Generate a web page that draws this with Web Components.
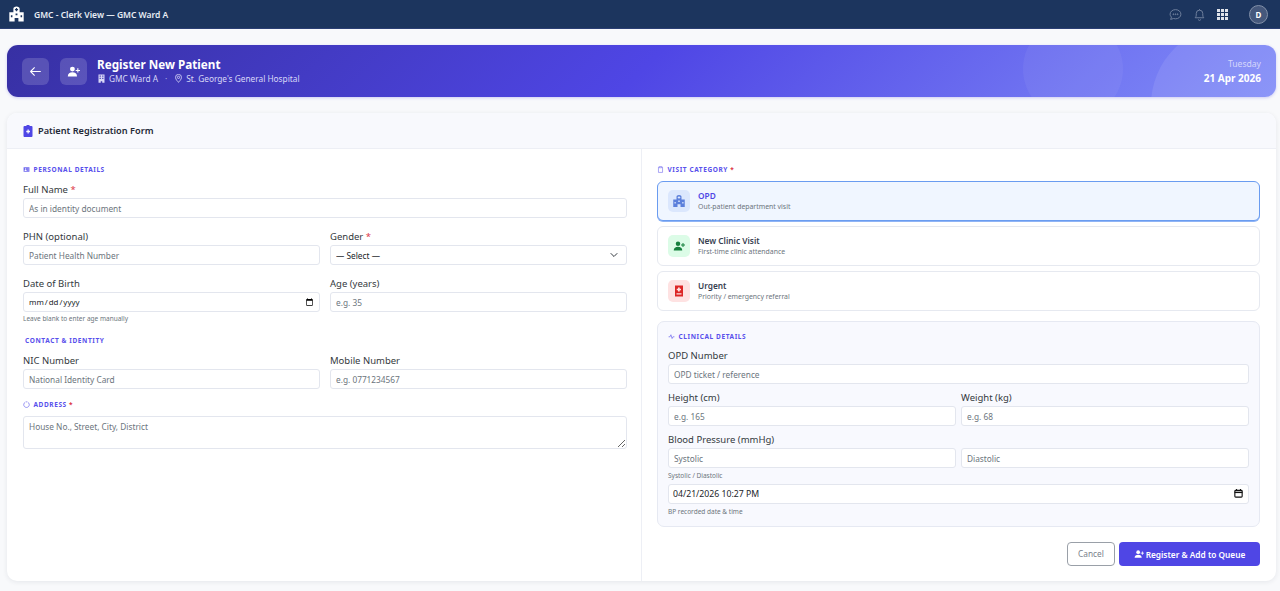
<!DOCTYPE html>
<html lang="en"><head><meta charset="utf-8"><title>Register New Patient</title>
<style>
html,body{margin:0;height:591px;overflow:hidden;background:#f8f9fb;font-family:"Noto Sans","Open Sans",sans-serif;color:#212529}
body{display:flex;flex-direction:column}
.fields{display:grid;grid-template-columns:1fr 1fr;gap:0 10px}
.tight{gap:0 5px}
</style></head><body>
<template id="ic-user-plus"><svg viewBox="0 0 24 24" width="100%" height="100%" fill="currentColor" style="display:block"><circle cx="10" cy="7.500" r="4.500"/><path d="M1.500 21c0-5 3.600-7.500 8.500-7.500s8.500 2.500 8.500 7.500z"/><path d="M19 6v3h-3v2h3v3h2v-3h3V9h-3V6z"/></svg></template>

<app-topbar></app-topbar>
<page-banner></page-banner>
<form-card>
  <span slot="title">Patient Registration Form</span>
  <div slot="left">
    <section-label icon="id" gap="personal">PERSONAL DETAILS</section-label>
    <form-field label="Full Name" required placeholder="As in identity document"></form-field>
    <div class="fields">
      <form-field label="PHN (optional)" placeholder="Patient Health Number"></form-field>
      <form-field label="Gender" required type="select"></form-field>
      <form-field label="Date of Birth" type="date" help="Leave blank to enter age manually"></form-field>
      <form-field label="Age (years)" placeholder="e.g. 35"></form-field>
    </div>
    <section-label gap="contact">CONTACT &amp; IDENTITY</section-label>
    <div class="fields">
      <form-field label="NIC Number" placeholder="National Identity Card"></form-field>
      <form-field label="Mobile Number" placeholder="e.g. 0771234567"></form-field>
    </div>
    <section-label icon="pin" required gap="address">ADDRESS</section-label>
    <form-field type="textarea" placeholder="House No., Street, City, District"></form-field>
  </div>
  <div slot="right">
    <section-label icon="clip" required>VISIT CATEGORY</section-label>
    <visit-option kind="opd" selected title="OPD" desc="Out-patient department visit"></visit-option>
    <visit-option kind="new" title="New Clinic Visit" desc="First-time clinic attendance"></visit-option>
    <visit-option kind="urgent" title="Urgent" desc="Priority / emergency referral"></visit-option>
    <clinical-box>
      <section-label icon="pulse" gap="clinical">CLINICAL DETAILS</section-label>
      <form-field label="OPD Number" placeholder="OPD ticket / reference"></form-field>
      <div class="fields tight">
        <form-field label="Height (cm)" placeholder="e.g. 165"></form-field>
        <form-field label="Weight (kg)" placeholder="e.g. 68"></form-field>
      </div>
      <form-field label="Blood Pressure (mmHg)" placeholder="Systolic" pair="Diastolic" help="Systolic / Diastolic" style="--gap:3px"></form-field>
      <form-field type="stamp" value="04/21/2026 10:27 PM" help="BP recorded date &amp; time"></form-field>
    </clinical-box>
    <form-actions></form-actions>
  </div>
</form-card>

<script>
const userPlus=()=>document.getElementById('ic-user-plus').innerHTML;
const hospital=`<svg viewBox="0 0 24 24" width="100%" height="100%" fill="currentColor" style="display:block"><path fill-rule="evenodd" d="M7 9V3.500C7 1.500 9 0 12 0s5 1.500 5 3.500V9h6.500v15H15v-5.500H9V24H.5V9zM11 2.500V4H9.500v2H11v1.500h2V6h1.500V4H13V2.500zM3 14v3h2.500v-3zm15.500 0v3H21v-3zm-8-3v3h3v-3z"/></svg>`;
const calendar=`<svg viewBox="0 0 16 16" width="9" height="9" fill="none" stroke="#111" stroke-width="2" style="display:block"><rect x="1.500" y="2.500" width="13" height="12" rx="1.500"/><path d="M1 6h14" stroke-width="2.500"/><path d="M4.500 0v3M11.500 0v3"/></svg>`;
class Base extends HTMLElement{
  render(html){ if(!this.shadowRoot) this.attachShadow({mode:'open'}); this.shadowRoot.innerHTML=html; }
}
customElements.define('app-topbar',class extends Base{connectedCallback(){this.render(`<style>
:host{display:flex;flex:none;align-items:center;height:28px;background:#1c355e;border-bottom:1px solid #2b3f74;padding:0 12px 0 9px;color:#fff;box-sizing:content-box}
.logo{width:15px;height:16px;color:#fff;margin-right:10px}
.t{font-size:8.500px;font-weight:600;color:#e8edf5;flex:1}
.i{width:13px;height:13px;color:#6f7f9c;margin-right:11px}
.i svg{display:block}
.g{display:grid;grid-template-columns:repeat(3,3px);grid-template-rows:repeat(3,3px);gap:1px;margin:0 21px 0 0}
.g b{background:#dfe3ea}
.a{width:19px;height:19px;border-radius:50%;background:#45587c;border:1px solid #8290a8;box-sizing:border-box;font-size:8px;font-weight:700;display:flex;align-items:center;justify-content:center;color:#fff}
</style>
<span class="logo">${hospital}</span><span class="t">GMC - Clerk View — GMC Ward A</span>
<span class="i"><svg viewBox="0 0 24 24" width="100%" height="100%" fill="none" stroke="currentColor" stroke-width="1.800"><path d="M12 3c5.500 0 10 3.700 10 8.500S17.500 20 12 20c-1.300 0-2.500-.2-3.600-.6L3 21l1.600-4.200C3 15.400 2 13.500 2 11.500 2 6.700 6.500 3 12 3z"/><circle cx="8" cy="11.500" r=".8" fill="currentColor"/><circle cx="12" cy="11.500" r=".8" fill="currentColor"/><circle cx="16" cy="11.500" r=".8" fill="currentColor"/></svg></span>
<span class="i"><svg viewBox="0 0 24 24" width="100%" height="100%" fill="none" stroke="currentColor" stroke-width="1.800"><path d="M4 18c1.500-1.500 2-3 2-5V10a6 6 0 0 1 12 0v3c0 2 .5 3.500 2 5z"/><path d="M10 21a2 2 0 0 0 4 0M12 2v2"/></svg></span>
<span class="g">${'<b></b>'.repeat(9)}</span><span class="a">D</span>`)}});

customElements.define('page-banner',class extends Base{connectedCallback(){this.render(`<style>
:host{display:flex;flex:none;align-items:center;position:relative;overflow:hidden;height:52px;margin:16px 4px 0 7px;padding:0 15px;border-radius:11px;color:#fff;gap:10px;
background:linear-gradient(135deg,#3730a3 0%,#4f46e5 50%,#818cf8 100%);box-shadow:0 1px 3px rgba(79,70,229,.25)}
.c{position:absolute;border-radius:50%;background:rgba(255,255,255,.05)}
.c1{width:100px;height:100px;left:1016px;top:-26px}
.c2{width:160px;height:160px;left:1144px;top:-20px;background:rgba(255,255,255,.09)}
.btn{width:27px;height:27px;border-radius:6px;background:rgba(255,255,255,.16);display:flex;align-items:center;justify-content:center;flex:none}
.btn svg{width:13px;height:13px;display:block}
.m{flex:1;display:flex;flex-direction:column;position:relative}
h1{margin:0 0 2px;font-size:11.700px;line-height:13px;font-weight:700}
.s{display:flex;align-items:center;font-size:8.300px;line-height:12px;color:#d9d8f7}
.s svg{width:9px;height:9px;margin-right:3px}
.dot{margin:0 7px;opacity:.7}
.d{text-align:right;position:relative}
.d1{font-size:8.600px;line-height:13px;color:#d5d6fb}
.d2{font-size:10px;line-height:14px;font-weight:700}
</style>
<i class="c c1"></i><i class="c c2"></i>
<span class="btn"><svg viewBox="0 0 24 24" fill="none" stroke="currentColor" stroke-width="2" stroke-linecap="round" stroke-linejoin="round"><path d="M21 12H3M10 5l-7 7 7 7"/></svg></span>
<span class="btn" style="margin-left:1px">${userPlus()}</span>
<div class="m"><h1>Register New Patient</h1>
<div class="s"><svg viewBox="0 0 24 24" fill="currentColor"><path fill-rule="evenodd" d="M4 1h16v22h-6v-4h-4v4H4zM7 4v3h3V4zm7 0v3h3V4zM7 10v3h3v-3zm7 0v3h3v-3z"/></svg>GMC Ward A<span class="dot">·</span><svg viewBox="0 0 24 24" fill="none" stroke="currentColor" stroke-width="2.200"><path d="M12 22s8-7 8-13a8 8 0 0 0-16 0c0 6 8 13 8 13z"/><circle cx="12" cy="9" r="3"/></svg>St. George's General Hospital</div></div>
<div class="d"><div class="d1">Tuesday</div><div class="d2">21 Apr 2026</div></div>`)}});

customElements.define('form-card',class extends Base{connectedCallback(){this.render(`<style>
:host{display:flex;flex-direction:column;flex:none;height:468px;margin:16px 4px 0 7px;background:#fff;border-radius:10px;box-shadow:0 1px 5px rgba(30,40,70,.09);overflow:hidden}
header{display:flex;align-items:center;height:35px;flex:none;background:#f8f9fd;border-bottom:1px solid #edeff5;padding:0 16px;font-size:9.200px;font-weight:600;color:#1f2937;gap:5px}
header svg{width:10px;height:12px;color:#4f46e5}
.cols{flex:1;display:grid;grid-template-columns:635px 1fr;min-height:0}
.l{padding:14px 14px 0 16px;border-right:1px solid #edeff5}
.r{padding:14px 16px 0 15px}
</style>
<header><svg viewBox="0 0 20 24" fill="currentColor"><path fill-rule="evenodd" d="M7 0h6v2h4a2 2 0 0 1 2 2v18a2 2 0 0 1-2 2H3a2 2 0 0 1-2-2V4a2 2 0 0 1 2-2h4zM9 9v2.500H6.500v3H9V17h2.500v-2.500H14v-3h-2.500V9z"/></svg><slot name="title"></slot></header>
<div class="cols"><div class="l"><slot name="left"></slot></div><div class="r"><slot name="right"></slot></div></div>`)}});

const lblIcons={
 id:`<path fill-rule="evenodd" d="M2 4h20v16H2zm7 4a2.500 2.500 0 1 0 0 5 2.500 2.500 0 0 0 0-5zM5 17h8c0-2-2-3-4-3s-4 1-4 3zm10-8v1.500h5V9zm0 4v1.500h5V13z"/>`,
 clip:`<path fill="none" stroke="currentColor" stroke-width="2" d="M8 4H5v18h14V4h-3M8 2h8v4H8z"/>`,
 pin:`<path fill="none" stroke="currentColor" stroke-width="2.400" d="M7 4.500a9.500 9.500 0 1 0 10 0M9 3h6"/>`,
 pulse:`<path fill="none" stroke="currentColor" stroke-width="2.400" d="M2 13h5l3-7 4 13 3-6h5"/>`};
customElements.define('section-label',class extends Base{connectedCallback(){
 const ic=this.getAttribute('icon'),g=this.getAttribute('gap');
 const m={personal:'margin:0 0 7px',contact:'margin:-1px 0 7px 2px',address:'margin:-2px 0 6px',clinical:'margin:0 0 6px'}[g]||'margin:0 0 6px';
 this.render(`<style>
:host{display:flex;align-items:center;height:12px;font-size:6.500px;font-weight:700;letter-spacing:.6px;color:#5850ec;${m};gap:3.500px}
svg{width:7px;height:7px;flex:none;opacity:.85;display:block}
.r{color:#dc3545}
</style>${ic?`<svg viewBox="0 0 24 24" fill="currentColor">${lblIcons[ic]}</svg>`:''}<span><slot></slot>${this.hasAttribute('required')?' <span class="r">*</span>':''}</span>`)}});

customElements.define('form-field',class extends Base{connectedCallback(){
 const a=n=>this.getAttribute(n),t=a('type')||'text',ph=a('placeholder')||'';
 let ctl;
 if(t==='select') ctl=`<div class="rel"><select><option>— Select —</option></select><svg class="chev" viewBox="0 0 16 16" fill="none" stroke="#343a40" stroke-width="2" stroke-linecap="round" stroke-linejoin="round"><path d="M2 5l6 6 6-6"/></svg></div>`;
 else if(t==='textarea') ctl=`<textarea placeholder="${ph}"></textarea>`;
 else if(t==='stamp') ctl=`<div class="rel"><input class="st" value="${a('value')}"><span class="cal">${calendar}</span></div>`;
 else if(a('pair')) ctl=`<div class="pair"><input placeholder="${ph}"><input placeholder="${a('pair')}"></div>`;
 else ctl=`<input type="${t}" placeholder="${ph}">`;
 this.render(`<style>
:host{display:block;margin-bottom:var(--gap,var(--field-gap,11px))}
label{display:block;font-size:9.500px;line-height:15px;color:#343a40;margin-bottom:1px}
.r{color:#dc3545}
input,select,textarea{display:block;width:100%;box-sizing:border-box;height:20px;border:1px solid #e3e6ee;border-radius:3px;background:#fff;padding:0 5px;margin:0;font:8.300px "Noto Sans",sans-serif;color:#212529;outline:0}
input::placeholder,textarea::placeholder{color:#6c757d;opacity:1}
input[type=date]{font-size:7.900px}
input.st{font-size:8.700px;padding-left:4px}
input::-webkit-datetime-edit{margin-left:-1px}
input::-webkit-calendar-picker-indicator{width:9px;height:9px;padding:0;margin:0 0 0 4px}
textarea{height:33px;padding:4px 5px;resize:vertical}
select{appearance:none;-webkit-appearance:none}
.rel{position:relative}
.chev{position:absolute;right:9px;top:6px;width:8px;height:8px}
.cal{position:absolute;right:6px;top:5px}
.pair{display:grid;grid-template-columns:1fr 1fr;gap:5px}
.h{font-size:6.500px;line-height:10px;color:#6c757d;margin-top:var(--help-gap,2px)}
</style>
${a('label')?`<label>${a('label')}${this.hasAttribute('required')?' <span class="r">*</span>':''}</label>`:''}${ctl}${a('help')?`<div class="h">${a('help')}</div>`:''}`);
}});

const optIcons={
 opd:hospital,
 new:userPlus(),
 urgent:`<svg viewBox="0 0 24 24" width="100%" height="100%" fill="currentColor" style="display:block"><path fill-rule="evenodd" d="M4 1h16v22H4zm6 4v2.500H7.500v3H10V13h3.500v-2.500H16v-3h-2.500V5zM7 16.500v2.500h10v-2.500z"/></svg>`};
customElements.define('visit-option',class extends Base{connectedCallback(){
 const k=this.getAttribute('kind'),sel=this.hasAttribute('selected');
 const s={opd:'background:#dbe7fd;color:#5b7fdb',new:'background:#dcfce7;color:#15803d',urgent:'background:#fee2e2;color:#dc2626'}[k];
 this.render(`<style>
:host{display:flex;align-items:center;box-sizing:border-box;height:40px;margin-bottom:5px;padding:0 10px;gap:8px;border:1px solid ${sel?'#6a9cf0':'#e6e9f0'};border-radius:6px;background:${sel?'#f0f6ff':'#fff'};${sel?'box-shadow:0 1px 0 #8fb4f5;':''}}
.i{width:22px;height:22px;border-radius:5px;display:flex;align-items:center;justify-content:center;${s}}
.i span{width:12px;height:12px;display:block}
.t{font-size:8.300px;line-height:12px;font-weight:600;color:${sel?'#4f46e5':'#374151'}}
.d{font-size:6.900px;line-height:10px;color:#6c757d}
</style><span class="i"><span>${optIcons[k]}</span></span><div><div class="t">${this.getAttribute('title')}</div><div class="d">${this.getAttribute('desc')}</div></div>`)}});

customElements.define('clinical-box',class extends Base{connectedCallback(){this.render(`<style>
:host{display:block;box-sizing:border-box;height:206px;margin-top:10px;padding:8px 10px 0;background:#f8f9fe;border:1px solid #e6e9f2;border-radius:7px;--field-gap:6px;--help-gap:3px}
</style><slot></slot>`)}});

customElements.define('form-actions',class extends Base{connectedCallback(){this.render(`<style>
:host{display:flex;justify-content:flex-end;gap:4px;margin-top:15px}
.b{height:24px;box-sizing:border-box;border-radius:4px;display:flex;align-items:center;justify-content:center;font-size:8.300px}
.c{width:48px;background:#fff;border:1px solid #9aa0a8;color:#7a828c;padding-bottom:2px}
.p{width:141px;background:#4f46e5;color:#fff;font-weight:600;gap:2px}
.p span{width:10px;height:10px;display:block}
</style><div class="b c">Cancel</div><div class="b p"><span>${userPlus()}</span>Register &amp; Add to Queue</div>`)}});
</script>
</body></html>
